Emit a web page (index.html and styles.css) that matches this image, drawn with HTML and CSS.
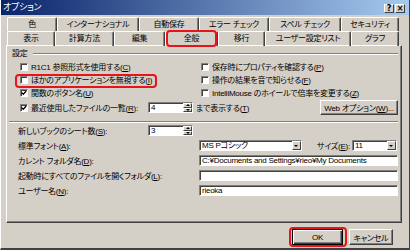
FILE: index.html
```html
<!DOCTYPE html>
<html lang="ja">
<head>
  <meta charset="UTF-8" />
  <title>オプション</title>
  <link rel="stylesheet" href="styles.css">
</head>
<body>
  <div class="dialog">
    <div class="titlebar">
      <span class="title">オプション</span>
      <span class="tb-buttons"><span class="tb-btn">?</span><span class="tb-btn">×</span></span>
    </div>

    <div class="tabs">
      <div class="tab-row row-back">
        <div class="tab">色</div>
        <div class="tab">インターナショナル</div>
        <div class="tab">自動保存</div>
        <div class="tab">エラー チェック</div>
        <div class="tab">スペル チェック</div>
        <div class="tab">セキュリティ</div>
      </div>
      <div class="tab-row row-front">
        <div class="tab">表示</div>
        <div class="tab">計算方法</div>
        <div class="tab">編集</div>
        <div class="tab active marked">全般</div>
        <div class="tab">移行</div>
        <div class="tab">ユーザー設定リスト</div>
        <div class="tab">グラフ</div>
      </div>
    </div>

    <div class="panel">
      <div class="group-title">設定</div>

      <div class="checks">
        <label class="check"><span class="box"></span><span>R1C1 参照形式を使用する(<u>C</u>)</span></label>
        <label class="check"><span class="box"></span><span>保存時にプロパティを確認する(<u>P</u>)</span></label>
        <label class="check marked"><span class="box"></span><span>ほかのアプリケーションを無視する(<u>I</u>)</span></label>
        <label class="check"><span class="box"></span><span>操作の結果を音で知らせる(<u>F</u>)</span></label>
        <label class="check"><span class="box"><svg viewBox="0 0 6 6"><path d="M0.8 2.6 L2.3 4.2 L5.2 1" /></svg></span><span>関数のボタン名(<u>U</u>)</span></label>
        <label class="check"><span class="box"></span><span>IntelliMouse のホイールで倍率を変更する(<u>Z</u>)</span></label>
      </div>

      <div class="recent-row">
        <label class="check recent"><span class="box"><svg viewBox="0 0 6 6"><path d="M0.8 2.6 L2.3 4.2 L5.2 1" /></svg></span><span>最近使用したファイルの一覧(<u>R</u>):</span></label>
        <span class="spin"><span class="spin-val">4</span><span class="spin-btns"><span class="spin-up"></span><span class="spin-down"></span></span></span>
        <span class="after-spin">まで表示する(<u>T</u>)</span>
        <span class="btn web-btn"><span>Web オプション(<u>W</u>)...</span></span>
      </div>

      <div class="separator"></div>

      <div class="fields">
        <span class="field-label">新しいブックのシート数(<u>S</u>):</span>
        <span class="spin"><span class="spin-val">3</span><span class="spin-btns"><span class="spin-up"></span><span class="spin-down"></span></span></span>
        <span></span>

        <span class="field-label wide">標準フォント(<u>A</u>):</span>
        <span class="font-row">
          <span class="drop font-drop"><span class="drop-val">MS Pゴシック</span><span class="drop-btn"></span></span>
          <span class="size-label">サイズ(<u>E</u>):</span>
          <span class="drop size-drop"><span class="drop-val">11</span><span class="drop-btn"></span></span>
        </span>

        <span class="field-label wide">カレント フォルダ名(<u>D</u>):</span>
        <span class="text-input">C:¥Documents and Settings¥rieo¥My Documents</span>

        <span class="field-label wide">起動時にすべてのファイルを開くフォルダ(<u>L</u>):</span>
        <span class="text-input"></span>

        <span class="field-label wide">ユーザー名(<u>N</u>):</span>
        <span class="text-input">rieoka</span>
      </div>
    </div>

    <div class="footer">
      <span class="btn default marked">OK</span>
      <span class="btn cancel">キャンセル</span>
    </div>
  </div>
</body>
</html>
```

FILE: styles.css
```css
* {
  box-sizing: border-box;
}
body {
  margin: 0;
  font-family: "Liberation Sans", "Noto Sans CJK JP", sans-serif;
  font-size: 8px;
  font-feature-settings: "palt";
  letter-spacing: -0.25px;
  color: #000;
  background: #d4d0c8;
}
u {
  text-decoration-thickness: 1px;
}
.dialog {
  width: 410px;
  height: 250px;
  background: #d4d0c8;
  border-left: 1px solid #fff;
  border-right: 1px solid #404040;
  border-bottom: 2px solid #404040;
}
.titlebar {
  height: 15px;
  background: linear-gradient(to right, #0a246a, #a6caf0);
  display: flex;
  align-items: center;
  justify-content: space-between;
  padding: 0 4px 0 2px;
}
.title {
  color: #fff;
  font-size: 9px;
  line-height: 15px;
}
.tb-buttons {
  display: flex;
  gap: 1px;
  margin-top: 2px;
}
.tb-btn {
  width: 10px;
  height: 9px;
  background: #d4d0c8;
  border: 1px solid;
  border-color: #fff #404040 #404040 #fff;
  font: bold 8px/7px "DejaVu Sans", sans-serif;
  letter-spacing: 0;
  text-align: center;
}

/* tabs */
.tabs {
  margin: 2px 0 0 6px;
}
.tab-row {
  display: grid;
  height: 14px;
}
.row-back {
  grid-template-columns: 50px 82px 60px 70px 72px 58px;
}
.row-front {
  grid-template-columns: 48px 59px 51px 53px 47px 86px 48px;
}
.tab {
  border-top: 1px solid #fff;
  border-left: 1px solid #fff;
  border-right: 1px solid #404040;
  box-shadow: inset -1px 0 #808080;
  border-radius: 2px 2px 0 0;
  text-align: center;
  line-height: 13px;
  white-space: nowrap;
}
.tab.active {
  position: relative;
  z-index: 1;
  height: 15px;
  background: #d4d0c8;
}
.marked {
  position: relative;
}
.marked::after {
  content: "";
  position: absolute;
  border: 2px solid #e8141b;
  border-radius: 4px;
  pointer-events: none;
}
.tab.marked::after {
  top: -2px;
  left: 0;
  right: 0;
  bottom: -1px;
}

/* panel */
.panel {
  margin: 0 7px 0 5px;
  height: 178px;
  border: 1px solid;
  border-color: #fff #404040 #404040 #fff;
  box-shadow: inset -1px -1px #808080;
  padding: 3px 3px 0 5px;
}
.group-title {
  display: flex;
  align-items: center;
  gap: 5px;
  height: 10px;
  line-height: 10px;
}
.group-title::after {
  content: "";
  flex: 1;
  border-top: 1px solid #808080;
  border-bottom: 1px solid #fff;
}
.checks {
  display: grid;
  grid-template-columns: 181px 1fr;
  grid-auto-rows: 13px;
  padding-left: 8px;
  margin-top: 1px;
}
.check {
  display: flex;
  align-items: center;
  gap: 3px;
  white-space: nowrap;
}
.check.marked::after {
  top: 1px;
  left: -5px;
  width: 138px;
  bottom: -2px;
}
.box {
  width: 8px;
  height: 8px;
  flex: none;
  background: #fff;
  border: 1px solid;
  border-color: #808080 #fff #fff #808080;
  box-shadow: inset 1px 1px #404040;
}
.box svg {
  display: block;
  width: 6px;
  height: 6px;
}
.box path {
  fill: none;
  stroke: #000;
  stroke-width: 1.3;
}
.recent-row {
  display: flex;
  align-items: center;
  height: 15px;
  padding-left: 8px;
  margin-top: 1px;
}
.recent {
  width: 128px;
}
.after-spin {
  margin-left: 3px;
}
.btn {
  display: inline-flex;
  align-items: center;
  justify-content: center;
  background: #d4d0c8;
  border: 1px solid;
  border-color: #fff #404040 #404040 #fff;
  box-shadow: inset -1px -1px #808080;
  white-space: nowrap;
}
.web-btn {
  margin-left: auto;
  width: 78px;
  height: 15px;
}

/* spin and drop downs */
.spin,
.drop,
.text-input {
  display: flex;
  align-items: center;
  height: 11px;
  background: #fff;
  border: 1px solid;
  border-color: #808080 #fff #fff #808080;
  box-shadow: inset 1px 1px #404040;
  white-space: nowrap;
  overflow: hidden;
}
.spin {
  width: 45px;
}
.spin-val,
.drop-val {
  flex: 1;
  padding-left: 2px;
  line-height: 9px;
}
.text-input {
  padding-left: 2px;
  line-height: 9px;
}
.spin-btns {
  width: 9px;
  height: 100%;
  display: flex;
  flex-direction: column;
}
.spin-up,
.spin-down {
  flex: 1;
  background: #d4d0c8;
  border: 1px solid;
  border-color: #fff #404040 #404040 #fff;
  position: relative;
}
.spin-up::before,
.spin-down::before {
  content: "";
  position: absolute;
  left: 2px;
  top: 0;
  border-left: 2px solid transparent;
  border-right: 2px solid transparent;
}
.spin-up::before {
  border-bottom: 2px solid #000;
}
.spin-down::before {
  border-top: 2px solid #000;
}
.drop-btn {
  width: 9px;
  height: 100%;
  background: #d4d0c8;
  border: 1px solid;
  border-color: #fff #404040 #404040 #fff;
  position: relative;
}
.drop-btn::before {
  content: "";
  position: absolute;
  left: 1px;
  top: 3px;
  border-left: 2px solid transparent;
  border-right: 2px solid transparent;
  border-top: 2px solid #000;
}
.separator {
  margin: 6px 0 0 -3px;
  border-top: 1px solid #808080;
  border-bottom: 1px solid #fff;
}
.fields {
  display: grid;
  grid-template-columns: 130px 51px 1fr;
  grid-auto-rows: 15px;
  align-items: center;
  padding-left: 6px;
  margin-top: 0;
}
.field-label {
  white-space: nowrap;
}
.field-label.wide {
  grid-column: 1 / 3;
}
.font-row {
  display: flex;
  align-items: center;
}
.font-drop {
  width: 103px;
}
.size-label {
  margin-left: 15px;
  width: 35px;
}
.size-drop {
  width: 45px;
}

/* footer */
.footer {
  display: flex;
  justify-content: flex-end;
  gap: 6px;
  padding: 6px 16px 0 0;
}
.footer .btn {
  height: 16px;
}
.btn.default {
  width: 51px;
  border: 1px solid #000;
  box-shadow: inset 1px 1px #fff, inset -1px -1px #404040, inset -2px -2px #808080;
}
.btn.cancel {
  width: 44px;
}
.btn.marked::after {
  top: -3px;
  left: -4px;
  right: -5px;
  bottom: -3px;
}
```
